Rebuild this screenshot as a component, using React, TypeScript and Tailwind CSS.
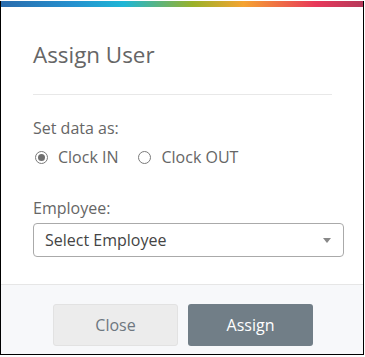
const font = { fontFamily: '"Open Sans", "Liberation Sans", sans-serif' };

function Radio({ checked, label }: { checked?: boolean; label: string }) {
  return (
    <label className="flex items-center gap-[10px]">
      <span className="flex h-[13px] w-[13px] items-center justify-center rounded-full border border-[#7a7a7a] bg-white">
        {checked && <span className="h-[7px] w-[7px] rounded-full bg-[#6f6f6f]" />}
      </span>
      <span className="text-[16px] leading-5 text-[#666]">{label}</span>
    </label>
  );
}

export default function App() {
  return (
    <div className="bg-white pt-px" style={font}>
      <div className="flex h-[354px] w-[364px] flex-col border-x border-b border-black">
        <div className="h-[6px] w-full bg-[linear-gradient(90deg,#2a6cad_0%,#2591cf_20%,#1eb6d6_34%,#9ab229_53%,#f5a331_67%,#e8385a_87%,#b63a5a_100%)]" />
        <div className="flex flex-1 flex-col bg-white pl-8 pr-[18px] pt-[33px]">
          <h2 className="text-[22.4px] leading-[30px] font-normal text-[#666]">Assign User</h2>
          <div className="mt-6 w-[299px] border-t border-[#e8e8e8]" />
          <div className="mt-[23px] text-[16px] leading-5 text-[#666]">Set data as:</div>
          <div className="mt-[9px] flex items-center gap-[20px] pl-[2px]">
            <Radio checked label="Clock IN" />
            <Radio label="Clock OUT" />
          </div>
          <div className="mt-[31px] text-[16px] leading-5 text-[#666]">Employee:</div>
          <div className="mt-[5px] flex h-[34px] w-[311px] items-center justify-between rounded-[4px] border border-[#aaa] pl-[11px] pr-[12px]">
            <span className="text-[16px] text-[#444]">Select Employee</span>
            <span className="h-0 w-0 border-x-[4px] border-t-[5px] border-x-transparent border-t-[#888]" />
          </div>
        </div>
        <div className="flex h-[70px] justify-center gap-[10px] border-t border-[#e6e6e6] bg-[#f7f8fa] pl-[2px] pt-[19px]">
          <button className="h-[42px] w-[125px] rounded-[3px] border border-[#e2e2e2] bg-[#ececec] text-[16px] text-[#6e7780]">
            Close
          </button>
          <button className="h-[42px] w-[125px] rounded-[3px] bg-[#717e87] text-[16px] text-white">
            Assign
          </button>
        </div>
      </div>
    </div>
  );
}
